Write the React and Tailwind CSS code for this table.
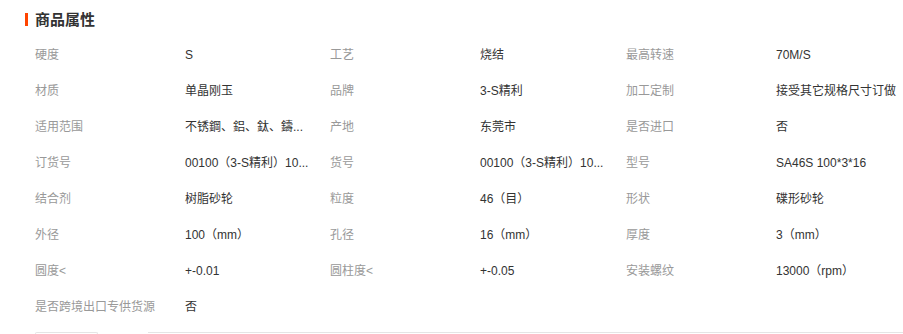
const rows = [
  [['硬度', 'S'], ['工艺', '烧结'], ['最高转速', '70M/S']],
  [['材质', '单晶刚玉'], ['品牌', '3-S精利'], ['加工定制', '接受其它规格尺寸订做']],
  [['适用范围', '不锈鋼、鋁、鈦、鑄...'], ['产地', '东莞市'], ['是否进口', '否']],
  [['订货号', '00100（3-S精利）10...'], ['货号', '00100（3-S精利）10...'], ['型号', 'SA46S 100*3*16']],
  [['结合剂', '树脂砂轮'], ['粒度', '46（目）'], ['形状', '碟形砂轮']],
  [['外径', '100（mm）'], ['孔径', '16（mm）'], ['厚度', '3（mm）']],
  [['圆度<', '+-0.01'], ['圆柱度<', '+-0.05'], ['安装螺纹', '13000（rpm）']],
  [['是否跨境出口专供货源', '否']],
]

export default function App() {
  return (
    <div
      className="w-[903px] h-[334px] overflow-hidden bg-white"
      style={{ fontFamily: '"Liberation Sans", "Noto Sans CJK SC", sans-serif' }}
    >
      <div className="flex items-center h-[37px] pl-[25px] pt-[2px]">
        <span className="block w-[3px] h-[13px] bg-[#ff4400]" />
        <h2 className="ml-[7px] text-[15px] font-bold text-[#333] leading-none">商品属性</h2>
      </div>

      <div className="pl-[35px]">
        {rows.map((row, i) => (
          <div key={i} className="grid grid-cols-[150px_145px_150px_146px_150px_1fr] h-[36px] items-center text-[12px] leading-none">
            {row.map(([label, value]) => (
              <div key={label} className="contents">
                <span className="text-[#999] whitespace-nowrap">{label}</span>
                <span className="text-[#333] whitespace-nowrap leading-[16px]">{value}</span>
              </div>
            ))}
          </div>
        ))}
      </div>

      <div className="flex items-start mt-[7px] pl-[35px]">
        <div className="w-[63px] h-[6px] border border-b-0 border-[#e5e5e5] rounded-t-[2px]" />
        <div className="ml-[50px] flex-1 border-t border-[#e5e5e5]" />
      </div>
    </div>
  )
}
